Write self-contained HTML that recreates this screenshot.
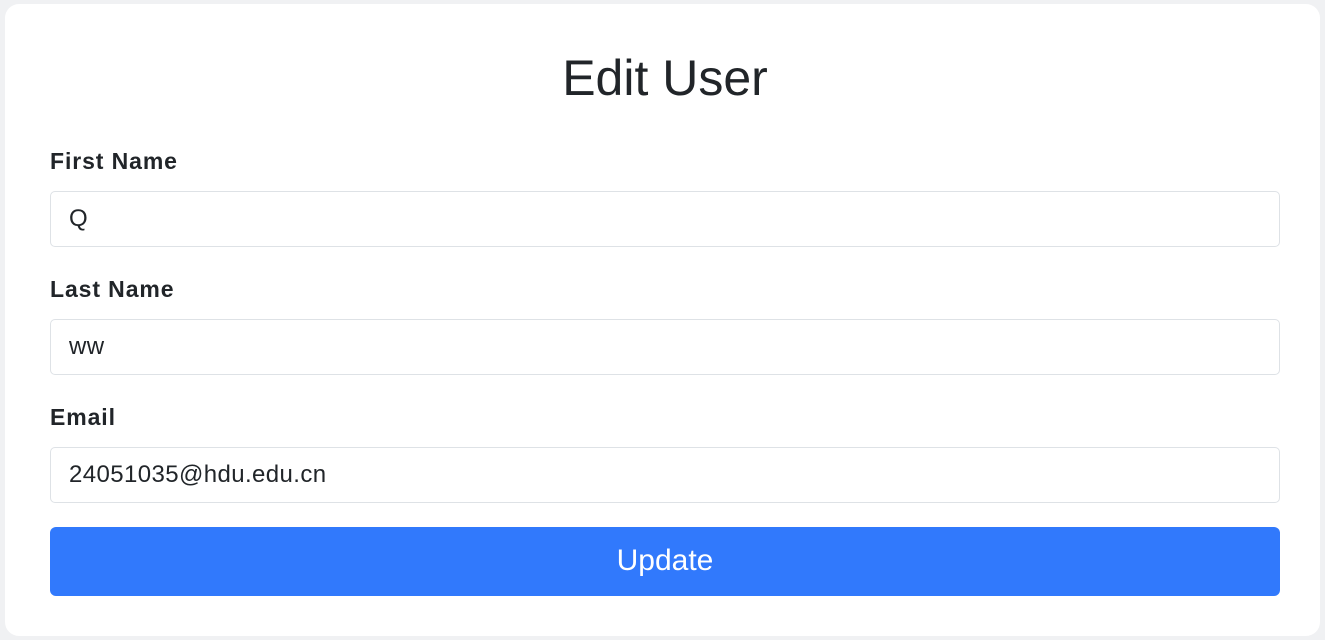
<!DOCTYPE html>
<html><head><style>
html,body{margin:0;padding:0;width:1325px;height:640px;background:#f0f1f3;overflow:hidden;font-family:"Liberation Sans",sans-serif;color:#212529}
.card{position:absolute;left:5px;top:4px;width:1315px;height:632px;background:#fff;border-radius:14px}
h1{position:absolute;left:0;width:1330px;top:46px;margin:0;text-align:center;font-weight:400;font-size:50px;line-height:64px}
.lbl{position:absolute;left:50px;font-weight:700;font-size:23px;letter-spacing:0.9px;line-height:30px}
.inp{position:absolute;left:50px;width:1228px;height:54px;border:1px solid #dee2e6;border-radius:5px;font-size:24px;letter-spacing:0.4px;line-height:54px;box-sizing:content-box}
.inp span{padding-left:18px}
.btn{position:absolute;left:50px;top:527px;width:1230px;height:69px;background:#3179fc;border-radius:6px;color:#fff;font-size:30px;text-align:center;line-height:67px}
</style></head><body>
<div class="card"></div>
<h1>Edit User</h1>
<div class="lbl" style="top:146px">First Name</div>
<div class="inp" style="top:191px"><span>Q</span></div>
<div class="lbl" style="top:274px">Last Name</div>
<div class="inp" style="top:319px"><span>ww</span></div>
<div class="lbl" style="top:402px">Email</div>
<div class="inp" style="top:447px"><span>24051035@hdu.edu.cn</span></div>
<div class="btn">Update</div>
</body></html>
